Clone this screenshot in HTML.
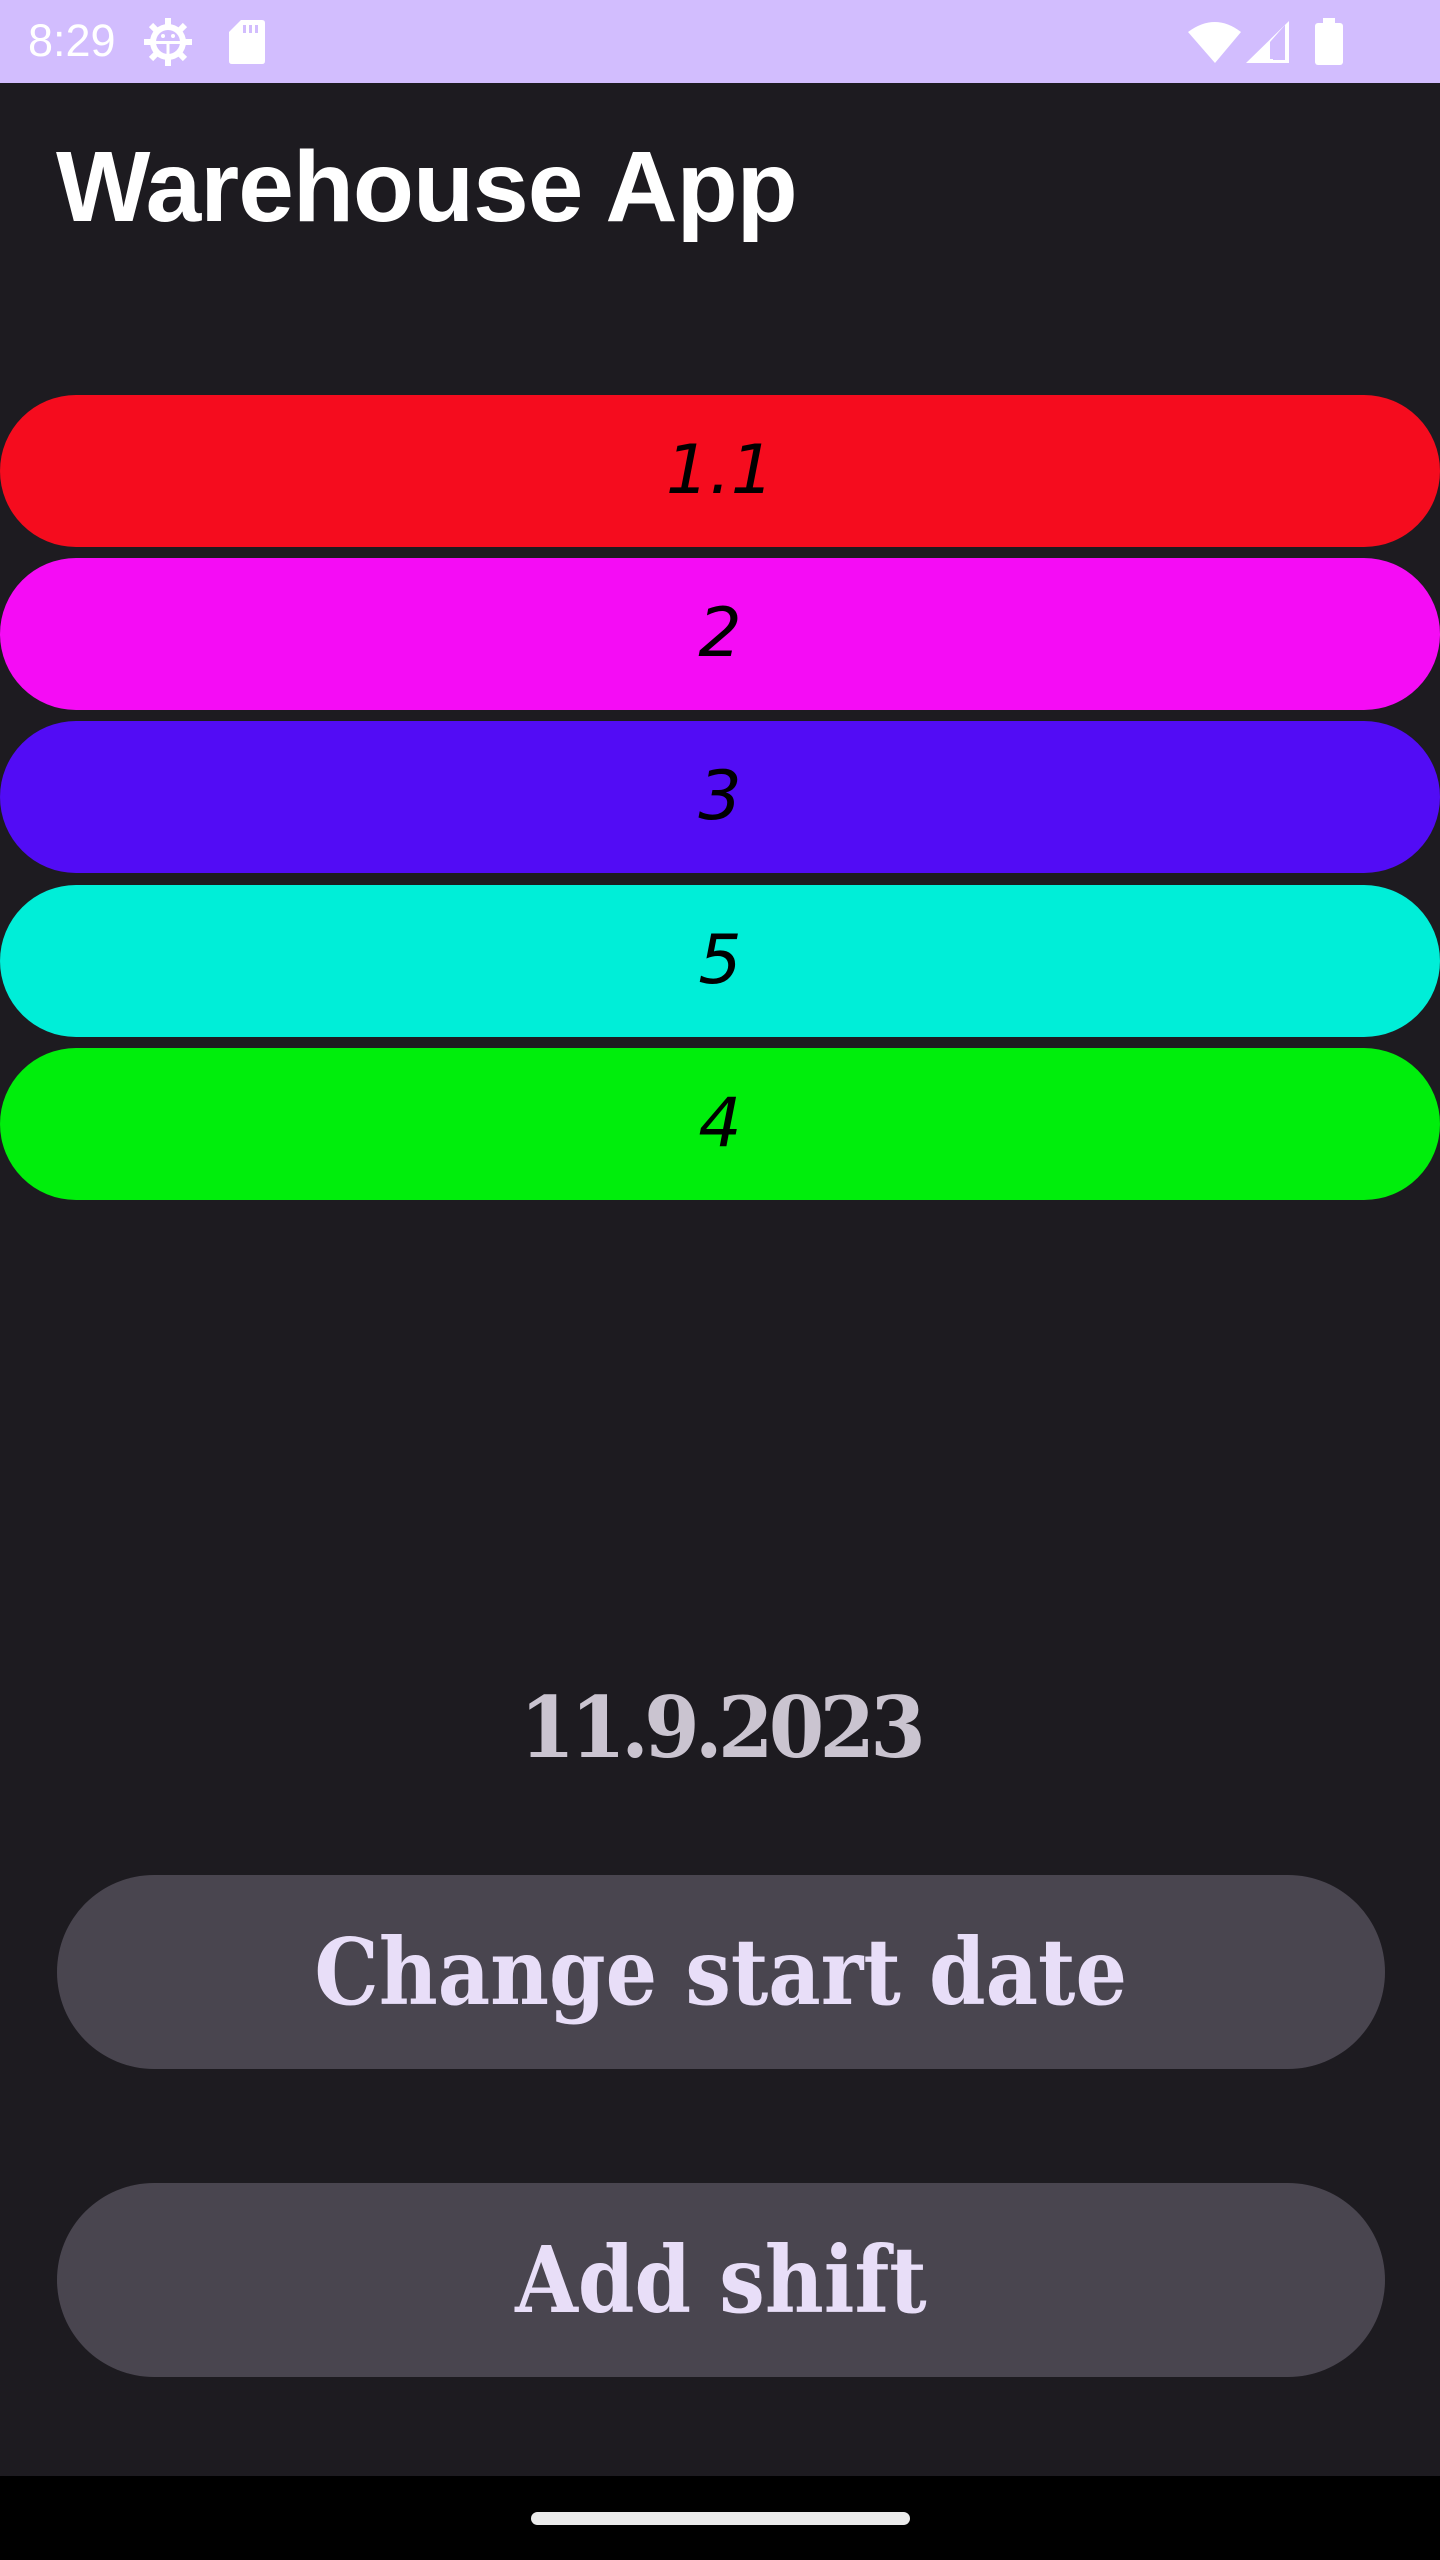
<!DOCTYPE html>
<html><head><meta charset="utf-8"><style>
*{margin:0;padding:0;box-sizing:border-box}
body{width:1440px;height:2560px;background:#1D1B20;position:relative;overflow:hidden;font-family:"Liberation Sans",sans-serif}
.status{position:absolute;left:0;top:0;width:1440px;height:83px;background:#D2BDFE}
.time{position:absolute;left:28px;top:15px;font-size:45px;color:#fff;font-family:"Liberation Sans",sans-serif}
.title{position:absolute;left:56px;top:130px;font-size:100px;font-weight:bold;color:#fff;letter-spacing:-1px}
.bar{position:absolute;left:0;width:1440px;height:152px;border-radius:76px;text-align:center;font-style:italic;font-size:68px;line-height:152px;color:#000;font-family:"DejaVu Sans","Liberation Sans",sans-serif}
.date{position:absolute;left:0;width:1440px;top:1680px;text-align:center;font-size:84px;line-height:96px;font-weight:bold;color:#CAC4D0;font-family:"DejaVu Serif","Liberation Serif",serif;letter-spacing:-5px}
.date span{display:inline-block;transform:scaleX(0.95)}
.btn{position:absolute;left:57px;width:1328px;height:194px;border-radius:97px;background:#49454F;text-align:center;line-height:194px;color:#E8DEF8;font-size:92px;font-weight:bold;font-family:"DejaVu Serif","Liberation Serif",serif}
.btn span{display:inline-block;transform:scaleX(0.88)}
.nav{position:absolute;left:0;top:2476px;width:1440px;height:84px;background:#000}
.handle{position:absolute;left:531px;top:2512px;width:379px;height:13px;border-radius:7px;background:#EBEBEB}
</style></head><body>
<div class="status">
<div class="time">8:29</div>
<svg style="position:absolute;left:143px;top:17px" width="50" height="50" viewBox="0 0 50 50">
<g fill="#fff"><circle cx="25" cy="25" r="18"/>
<g><rect x="22" y="1" width="6" height="8"/><rect x="22" y="41" width="6" height="8"/><rect x="1" y="22" width="8" height="6"/><rect x="41" y="22" width="8" height="6"/>
<rect x="22" y="1" width="6" height="8" transform="rotate(45 25 25)"/><rect x="22" y="41" width="6" height="8" transform="rotate(45 25 25)"/><rect x="1" y="22" width="8" height="6" transform="rotate(45 25 25)"/><rect x="41" y="22" width="8" height="6" transform="rotate(45 25 25)"/></g></g>
<circle cx="25" cy="25" r="12" fill="#D2BDFE"/>
<rect x="13" y="24" width="24" height="3" fill="#fff"/><rect x="23.5" y="24" width="3" height="13" fill="#fff"/>
<circle cx="20" cy="19" r="2" fill="#fff"/><circle cx="30" cy="19" r="2" fill="#fff"/>
</svg>
<svg style="position:absolute;left:229px;top:20px" width="36" height="44" viewBox="0 0 36 44"><path d="M12 0H33Q36 0 36 3V41Q36 44 33 44H3Q0 44 0 41V12Z" fill="#fff"/><rect x="14" y="5" width="3" height="8" fill="#D2BDFE"/><rect x="20" y="5" width="3" height="8" fill="#D2BDFE"/><rect x="26" y="5" width="3" height="8" fill="#D2BDFE"/></svg>
<svg style="position:absolute;left:1188px;top:20px" width="54" height="44" viewBox="0 0 54 44"><path d="M0 12Q27 -8 53 12L27 43Z" fill="#fff"/></svg>
<svg style="position:absolute;left:1245px;top:20px" width="46" height="44" viewBox="0 0 46 44"><path d="M44 1V43H1Z" fill="#fff"/><path d="M25 22V39H40V5Z" fill="#D2BDFE"/><path d="M28 40V26L40 10V40Z" fill="#D2BDFE"/></svg>
<svg style="position:absolute;left:1315px;top:18px" width="28" height="47" viewBox="0 0 28 47"><rect x="8" y="0" width="12" height="6" fill="#fff"/><rect x="0" y="5" width="28" height="42" rx="3" fill="#fff"/></svg>
</div>
<div class="title">Warehouse App</div>
<div class="bar" style="top:395px;background:#F50C1E">1.1</div>
<div class="bar" style="top:558px;background:#F50CF5">2</div>
<div class="bar" style="top:721px;background:#520CF5">3</div>
<div class="bar" style="top:885px;background:#00EED8">5</div>
<div class="bar" style="top:1048px;background:#00EE0C">4</div>
<div class="date"><span>11.9.2023</span></div>
<div class="btn" style="top:1875px"><span>Change start date</span></div>
<div class="btn" style="top:2183px"><span>Add shift</span></div>
<div class="nav"></div><div class="handle"></div>
</body></html>
